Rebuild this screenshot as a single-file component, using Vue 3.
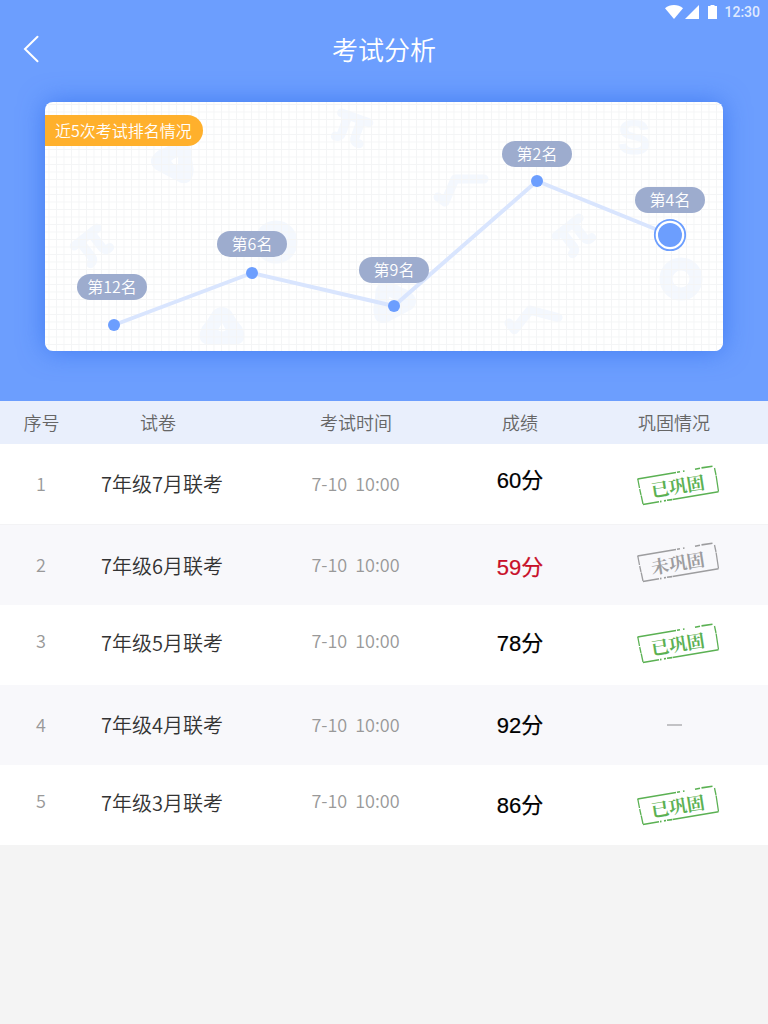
<script setup>
const points = [
  { x: 114, y: 325, px: 112, py: 287, label: '第12名' },
  { x: 252, y: 273, px: 252, py: 244, label: '第6名' },
  { x: 394, y: 306, px: 394, py: 270, label: '第9名' },
  { x: 537, y: 181, px: 537, py: 154, label: '第2名' },
  { x: 670, y: 235, px: 670, py: 200, label: '第4名' },
]
const line = points.map((p) => `${p.x},${p.y}`).join(' ')

const columns = ['序号', '试卷', '考试时间', '成绩', '巩固情况']
const rows = [
  { no: 1, name: '7年级7月联考', time: '7-10  10:00', score: '60分', state: '已巩固' },
  { no: 2, name: '7年级6月联考', time: '7-10  10:00', score: '59分', state: '未巩固', fail: true },
  { no: 3, name: '7年级5月联考', time: '7-10  10:00', score: '78分', state: '已巩固' },
  { no: 4, name: '7年级4月联考', time: '7-10  10:00', score: '92分', state: '' },
  { no: 5, name: '7年级3月联考', time: '7-10  10:00', score: '86分', state: '已巩固' },
]
</script>

<template>
  <div class="page">
    <div class="hero">
      <div class="status">
        <svg class="signals" width="54" height="24" viewBox="664 0 54 24">
          <path d="M665 8.2C670 3.8 678 3.8 683 8.2L674 19Z" />
          <path d="M699 5V19H685Z" />
          <path d="M708 6h2.500V5h4v1H717V19H708Z" />
        </svg>
        <span class="clock">12:30</span>
      </div>
      <header class="bar">
        <svg class="back" width="18" height="28" viewBox="0 0 18 28">
          <path d="M15.500 1.800L3 14L15.500 26.200" />
        </svg>
        <h1>考试分析</h1>
      </header>
      <section class="card">
        <svg class="chart" width="678" height="249" viewBox="45 102 678 249">
          <defs>
            <pattern id="grid" x="48.500" y="104" width="7.500" height="7.500" patternUnits="userSpaceOnUse">
              <path d="M0 .5H7.500M.5 0V7.500" class="grid-line" />
            </pattern>
            <g id="pi">
              <path d="M-14 -11H15M-7 -10V8Q-7 13 -12 13M7 -10V7Q7 13 13 12" />
            </g>
            <g id="root">
              <path d="M-22 7L-15 12L-5 -11H24" />
            </g>
            <g id="tri">
              <path fill-rule="evenodd" d="M-9 -16Q0 -24 9 -16Q14 -7 20 0Q27 15 14 18H-14Q-27 15 -20 0Q-14 -7 -9 -16ZM0 -4L-4 3Q0 6 4 3Z" />
            </g>
          </defs>
          <g class="marks">
            <use href="#pi" transform="translate(351 128) rotate(20)" />
            <use href="#pi" transform="translate(92 246) rotate(-38)" />
            <use href="#pi" transform="translate(574 236) rotate(-38)" />
            <use href="#root" transform="translate(460 190)" />
            <use href="#root" transform="translate(532 322) rotate(15)" />
            <use href="#tri" class="solid" transform="translate(222 327)" />
            <use href="#tri" class="solid" transform="translate(176 160) rotate(28)" />
            <use href="#tri" class="solid" transform="translate(391 300) rotate(-28)" />
            <circle cx="276" cy="242" r="15" class="ring" />
            <circle cx="681" cy="279" r="15" class="ring" />
            <text x="634" y="154" class="letter">S</text>
          </g>
          <rect x="45" y="102" width="678" height="249" fill="url(#grid)" />
          <polyline :points="line" class="trend" />
          <g v-for="(p, i) in points" :key="p.label">
            <rect :x="p.px - 35" :y="p.py - 13" width="70" height="26" rx="13" class="pill" />
            <text :x="p.px" :y="p.py + 6" class="pill-text">{{ p.label }}</text>
            <template v-if="i === points.length - 1">
              <circle :cx="p.x" :cy="p.y" r="15.200" class="halo" />
              <circle :cx="p.x" :cy="p.y" r="12" class="dot" />
            </template>
            <circle v-else :cx="p.x" :cy="p.y" r="6" class="dot" />
          </g>
        </svg>
        <div class="tag">近5次考试排名情况</div>
      </section>
    </div>

    <div class="row head">
      <span v-for="c in columns" :key="c">{{ c }}</span>
    </div>
    <div class="rows">
      <div v-for="r in rows" :key="r.no" class="row item">
        <span class="no">{{ r.no }}</span>
        <span class="name">{{ r.name }}</span>
        <span class="time">{{ r.time }}</span>
        <span class="score" :class="{ fail: r.fail }">{{ r.score }}</span>
        <span class="state">
          <svg v-if="r.state" class="stamp" :class="{ gray: r.fail }" width="96" height="50" viewBox="0 0 96 50">
            <path class="edge" d="M7.500 19L46 12.500M47 12.300L50 11.800M53 11.200L54.500 11M65 9.300L70 8.300M71.500 7.900L82.500 6.300" />
            <path class="edge thin" d="M7.800 19L9.500 28M9.700 29L11 35M11.200 35.500L13 44M84.500 8L86 15M86.100 15.500L88.500 31.500" />
            <path class="edge" d="M13 44.500L29 41.800M30 41.600L31.500 41.400M34 40.900L36 40.500M37 40.300L42 39.600M42.500 39.500L88.500 31.800" />
            <text x="48" y="33" transform="rotate(-9 48 27)">{{ r.state }}</text>
          </svg>
          <i v-else class="dash"></i>
        </span>
      </div>
    </div>
  </div>
</template>

<style>
body { background: #f4f4f4; }
</style>

<style scoped>
.page {
  width: 768px;
  height: 1024px;
  overflow: hidden;
  background: #f4f4f4;
  font-family: "Noto Sans CJK SC DemiLight", "Noto Sans CJK SC", sans-serif;
  font-weight: 350;
}
.hero { height: 401px; background: #6c9efe; }
.status {
  height: 24px;
  display: flex;
  justify-content: flex-end;
  padding-right: 8px;
}
.signals { fill: #fff; }
.clock {
  width: 42px;
  text-align: right;
  font: 500 14px/24px Roboto, sans-serif;
  color: rgba(255, 255, 255, .8);
}
.bar {
  height: 50px;
  display: grid;
  grid-template-columns: 64px 1fr 64px;
  align-items: center;
}
.back { margin-left: 22px; fill: none; stroke: #fff; stroke-width: 2; stroke-linecap: round; }
h1 {
  margin: 0;
  text-align: center;
  font-size: 26px;
  line-height: 50px;
  height: 50px;
  font-weight: 400;
  color: #fff;
}
.card {
  position: relative;
  width: 678px;
  height: 249px;
  margin: 28px 0 0 45px;
  border-radius: 8px;
  background: #fff;
  box-shadow: 0 0 26px rgba(30, 95, 235, .55);
}
.chart { display: block; border-radius: 8px; }
.grid-line { fill: none; stroke: #f4f5f6; stroke-width: 1; }
.marks { fill: none; stroke: #f4f8fe; stroke-width: 9; stroke-linecap: round; stroke-linejoin: round; }
.solid { fill: #f4f8fe; stroke: none; }
.ring { stroke-width: 13; }
.letter {
  font: 700 49px "Liberation Sans", sans-serif;
  text-anchor: middle;
  fill: #f4f8fe;
  stroke-width: 1;
}
.trend { fill: none; stroke: #d9e5fe; stroke-width: 4; }
.pill { fill: #9dacce; }
.pill-text { font-size: 16px; fill: #fff; text-anchor: middle; }
.dot { fill: #6c9efe; }
.halo { fill: #fff; stroke: #6c9efe; stroke-width: 1.800; }
.tag {
  position: absolute;
  left: 0;
  top: 13px;
  width: 148px;
  height: 31px;
  padding-left: 10px;
  border-radius: 0 16px 16px 0;
  background: #ffb02c;
  color: #fff;
  font-size: 16px;
  font-weight: 400;
  line-height: 31px;
}
.row {
  display: grid;
  grid-template-columns: 82px 157px 233px 96px 200px;
}
.head {
  height: 43px;
  background: #e9effc;
  color: #666;
  font-size: 18px;
  line-height: 43px;
  text-align: center;
}
.head span:nth-child(1) { padding-left: 1px; }
.head span:nth-child(2) { padding-right: 5px; }
.head span:nth-child(3) { padding-left: 1px; }
.head span:nth-child(5) { margin-left: 12px; }
.item {
  height: 80px;
  background: #fff;
  line-height: 30px;
  align-items: start;
  --small: 24px;
  --name: 24px;
  --score: 22px;
  --state: 16px;
}
.item:nth-child(even) { background: #f8f8fb; }
.item:nth-child(1) { height: 81px; box-shadow: inset 0 -1px #f3f3f5; }
.item:nth-child(2) { --small: 24px; --name: 25px; --score: 28px; --state: 12px; }
.item:nth-child(3) { --small: 20px; --name: 22px; --score: 24px; --state: 13px; }
.item:nth-child(4) { --small: 24px; --name: 24px; --score: 26px; --state: 39px; }
.item:nth-child(5) { --small: 20px; --name: 22px; --score: 26px; --state: 15px; }
.no, .time { padding-top: var(--small); color: #999; font-size: 18px; text-align: center; }
.time { white-space: pre; }
.name { padding-top: var(--name); padding-left: 19px; color: #333; font-size: 20px; line-height: 31px; white-space: nowrap; }
.score {
  padding-top: var(--score);
  text-align: center;
  font: 400 22px/30px "Liberation Sans", "Noto Sans CJK SC", sans-serif;
  color: #000;
  -webkit-text-stroke: .2px currentColor;
}
.fail { color: #c80f28; }
.state { padding-top: var(--state); display: flex; }
.stamp { display: block; margin-left: 62px; }
.edge { fill: none; stroke: #5bb153; stroke-width: 1.600; }
.thin { stroke-width: 1.300; }
.stamp text {
  font: 700 18px "Noto Serif CJK SC", "Noto Sans CJK SC", serif;
  fill: #5bb153;
  text-anchor: middle;
}
.gray .edge { stroke: #9d9d9f; }
.gray text { fill: #9d9d9f; }
.dash { width: 15px; height: 2px; margin-left: 99px; background: #c2c2c5; }
</style>
